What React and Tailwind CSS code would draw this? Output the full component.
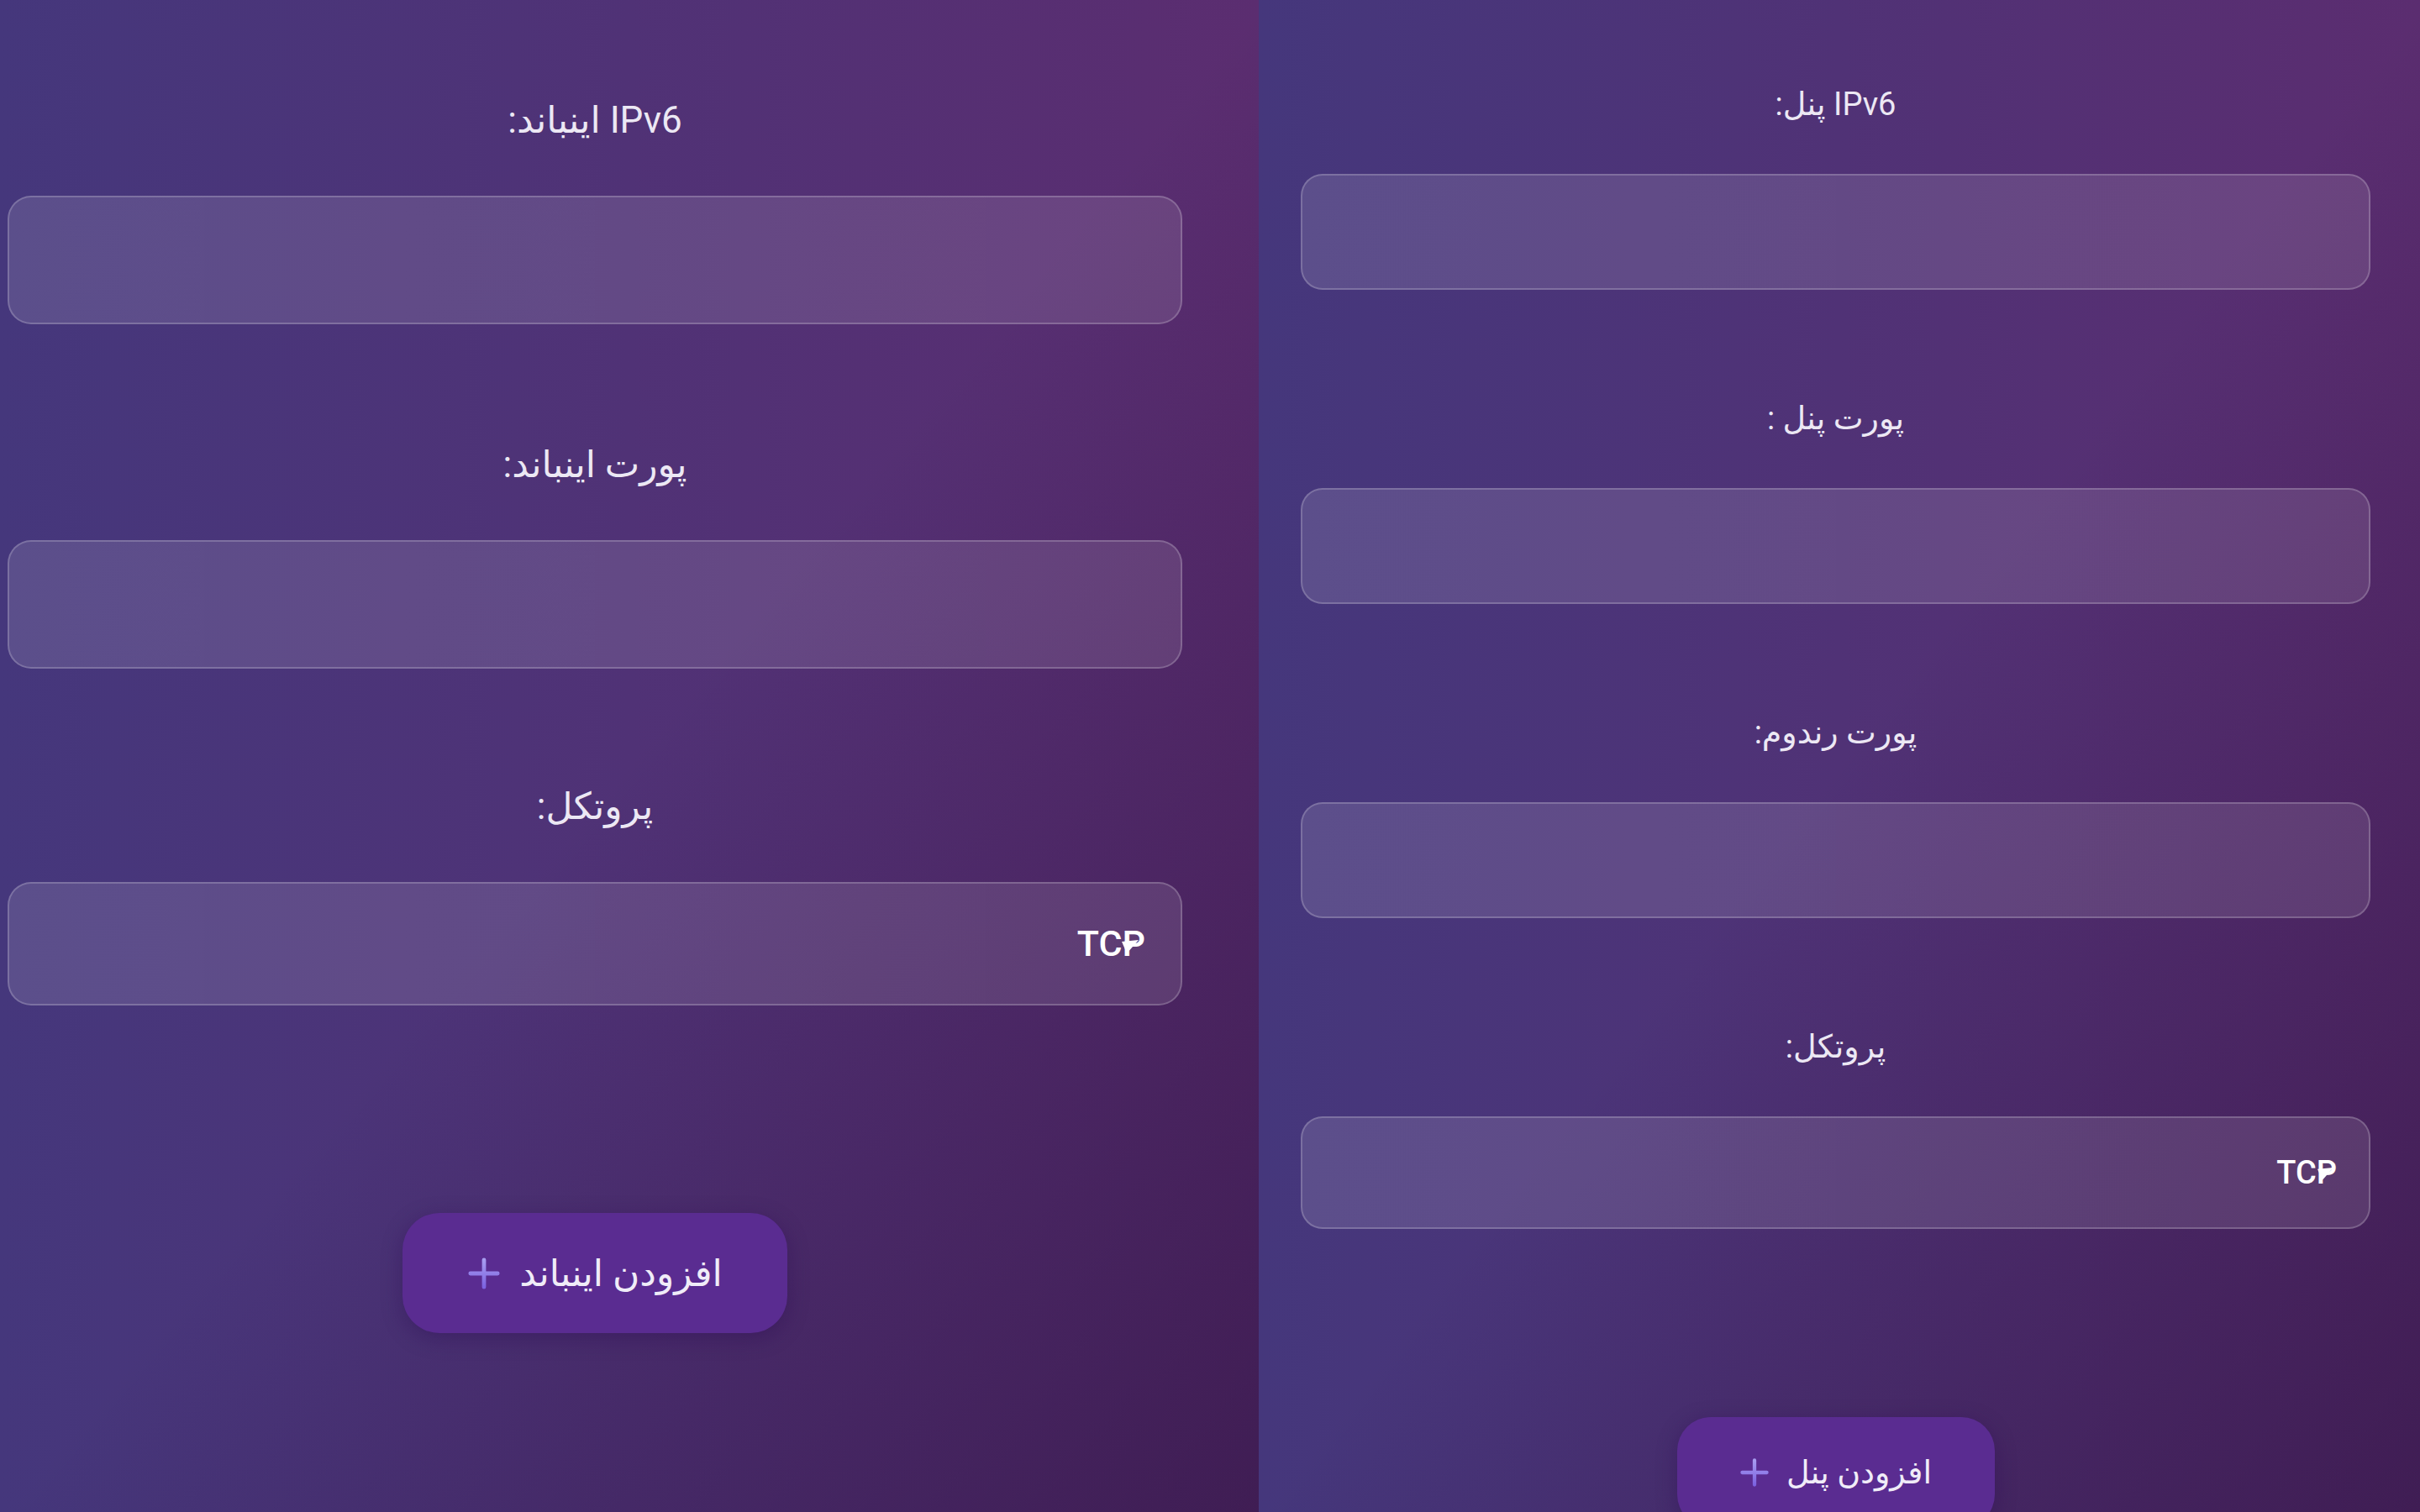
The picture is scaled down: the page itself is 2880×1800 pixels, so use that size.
import React from 'react';

const panelBg =
  'bg-[linear-gradient(to_bottom_right,transparent_50%,rgba(30,10,50,0.45)),linear-gradient(to_right,#45377c,#5b2d70)]';

function PlusIcon({ className }) {
  return (
    <svg viewBox="0 0 42 42" className={className} fill="none">
      <defs>
        <linearGradient id="plusGrad" x1="0" y1="0" x2="0" y2="1">
          <stop offset="0%" stopColor="#a79cf0" />
          <stop offset="100%" stopColor="#7c63e0" />
        </linearGradient>
      </defs>
      <path d="M21 4v34M4 21h34" stroke="url(#plusGrad)" strokeWidth="5" strokeLinecap="round" />
    </svg>
  );
}

function Caret({ className }) {
  return (
    <svg viewBox="0 0 22 18" className={className}>
      <polygon points="1,3 21,1 7,17" fill="#ffffff" />
    </svg>
  );
}

// big = left column (inbound), small = right column (panel)
function Field({ label, big, select }) {
  const labelCls = big
    ? 'text-[44px] leading-[60px]'
    : 'text-[38px] leading-[54px]';
  const boxCls = big
    ? 'mt-[60px] rounded-[28px]'
    : 'mt-[56px] rounded-[26px]';
  const h = big ? (select ? 'h-[147px]' : 'h-[153px]') : select ? 'h-[134px]' : 'h-[138px]';
  return (
    <div className="flex flex-col">
      <label className={`text-center text-[#ece8f4] ${labelCls}`}>{label}</label>
      <div
        className={`relative flex items-center border-2 border-white/20 bg-[linear-gradient(to_right,rgba(255,255,255,0.12),rgba(255,255,255,0.11))] ${boxCls} ${h} ${big ? 'px-[42px]' : 'px-[38px]'}`}
      >
        {select && (
          <>
            <span className={`font-medium text-white ${big ? 'text-[43px]' : 'text-[38px]'}`}>TCP</span>
            <Caret
              className={
                big
                  ? 'absolute right-[49px] top-[66px] h-[18px] w-[22px]'
                  : 'absolute right-[41px] top-[58px] h-[17px] w-[21px]'
              }
            />
          </>
        )}
      </div>
    </div>
  );
}

export default function App() {
  return (
    <div className="flex h-[1800px] w-[2880px] overflow-hidden font-[Roboto,'DejaVu_Sans',sans-serif]">
      {/* Inbound form */}
      <div className={`flex w-[1498px] shrink-0 flex-col pl-[9px] pr-[91px] pt-[113px] ${panelBg}`}>
        <div dir="rtl" className="flex flex-col gap-[137px]">
          <Field big label="IPv6 اینباند:" />
          <Field big label="پورت اینباند:" />
          <div className="-mt-[3px]">
            <Field big select label="پروتکل:" />
          </div>
        </div>
        <div className="mt-[247px] flex justify-center">
          <button
            dir="rtl"
            className="flex h-[143px] w-[458px] items-center justify-center gap-[22px] rounded-[44px] bg-[#5a2c91] text-[44px] text-[#f0ecf8] shadow-[0_6px_24px_rgba(40,10,80,0.35)]"
          >
            <span>افزودن اینباند</span>
            <PlusIcon className="h-[40px] w-[40px]" />
          </button>
        </div>
      </div>

      {/* Panel form */}
      <div className={`flex w-[1382px] shrink-0 flex-col pl-[50px] pr-[59px] ${panelBg}`}>
        <div className="mx-auto h-[3px] w-[523px] rounded-b-[3px] bg-[#6a4aa6]" />
        <div dir="rtl" className="mt-[97px] flex flex-col gap-[126px]">
          <Field label="IPv6 پنل:" />
          <Field label="پورت پنل :" />
          <Field label="پورت رندوم:" />
          <Field select label="پروتکل:" />
        </div>
        <div className="mt-[224px] flex justify-center">
          <button
            dir="rtl"
            className="flex h-[132px] w-[378px] shrink-0 items-center justify-center gap-[20px] rounded-[40px] bg-[#5a2c91] text-[38px] text-[#f0ecf8] shadow-[0_6px_24px_rgba(40,10,80,0.35)]"
          >
            <span>افزودن پنل</span>
            <PlusIcon className="h-[36px] w-[36px]" />
          </button>
        </div>
      </div>
    </div>
  );
}
